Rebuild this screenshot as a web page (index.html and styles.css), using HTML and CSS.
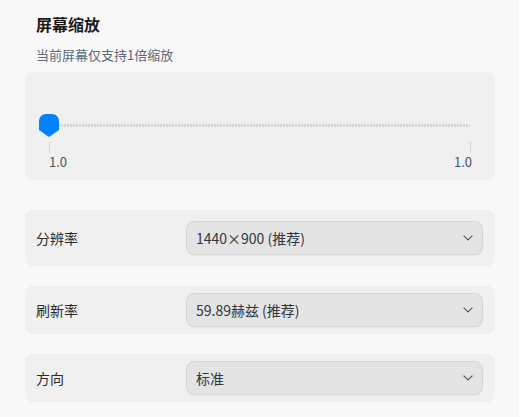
FILE: index.html
```html
<!DOCTYPE html>
<html lang="zh-CN">
<head>
<meta charset="utf-8">
<title>屏幕缩放</title>
<link rel="stylesheet" href="styles.css">
</head>
<body>
<div class="page">
  <h1 class="title">屏幕缩放</h1>
  <p class="subtitle">当前屏幕仅支持1倍缩放</p>

  <section class="card scale-card">
    <div class="slider">
      <div class="track"></div>
      <svg class="handle" width="20" height="23" viewBox="0 0 20 23">
        <path d="M0 7 A7 7 0 0 1 7 0 H13 A7 7 0 0 1 20 7 V16 L10 23 L0 16 Z" fill="#0081ff"/>
      </svg>
    </div>
    <div class="ticks">
      <span class="tick"></span>
      <span class="tick"></span>
    </div>
    <div class="tick-labels">
      <span>1.0</span>
      <span>1.0</span>
    </div>
  </section>

  <section class="card row row-first">
    <span class="label">分辨率</span>
    <div class="select">
      <span>1440×900 (推荐)</span>
      <svg class="chevron" width="10" height="6" viewBox="0 0 10 6"><polyline points="0.6,0.6 5,5 9.4,0.6" fill="none" stroke="#4f5863" stroke-width="1.2"/></svg>
    </div>
  </section>

  <section class="card row">
    <span class="label">刷新率</span>
    <div class="select">
      <span>59.89赫兹 (推荐)</span>
      <svg class="chevron" width="10" height="6" viewBox="0 0 10 6"><polyline points="0.6,0.6 5,5 9.4,0.6" fill="none" stroke="#4f5863" stroke-width="1.2"/></svg>
    </div>
  </section>

  <section class="card row">
    <span class="label">方向</span>
    <div class="select">
      <span>标准</span>
      <svg class="chevron" width="10" height="6" viewBox="0 0 10 6"><polyline points="0.6,0.6 5,5 9.4,0.6" fill="none" stroke="#4f5863" stroke-width="1.2"/></svg>
    </div>
  </section>
</div>
</body>
</html>
```

FILE: styles.css
```css
html, body {
  margin: 0;
  padding: 0;
  background: #f8f8f8;
}

body {
  font-family: "Noto Sans CJK SC", "Noto Sans", sans-serif;
  color: #2a2a2a;
}

.page {
  padding: 12px 24px 0 25px;
}

.title {
  margin: 0 0 0 11px;
  font-size: 16px;
  line-height: 24px;
  font-weight: 700;
  color: #1a1a1a;
}

.subtitle {
  margin: 9px 0 0 11px;
  font-size: 13px;
  line-height: 20px;
  color: #5c6978;
}

.card {
  background: #f0f0f0;
  border-radius: 8px;
}

.scale-card {
  margin-top: 7px;
  padding: 42px 24px 9px 24px;
}

.slider {
  position: relative;
  height: 23px;
}

.track {
  position: absolute;
  top: 10px;
  left: 0;
  right: 1px;
  height: 3px;
  background: repeating-linear-gradient(90deg, #d3d3d3 0 2px, transparent 2px 3px);
}

.handle {
  position: absolute;
  left: -10px;
  top: 0;
  display: block;
}

.ticks {
  margin-top: 5px;
  display: flex;
  justify-content: space-between;
  height: 11px;
}

.tick {
  width: 1px;
  height: 11px;
  background: #d2d2d2;
}

.tick-labels {
  display: flex;
  justify-content: space-between;
  font-size: 13px;
  line-height: 18px;
  color: #4a5360;
  margin-right: -1px;
}

.row {
  display: grid;
  grid-template-columns: 150px 1fr;
  align-items: center;
  padding: 7px 12px 7px 11px;
  margin-top: 20px;
}

.row-first {
  margin-top: 30px;
  padding-top: 11px;
  padding-bottom: 11px;
}

.label {
  font-size: 14px;
  line-height: 20px;
  color: #2b2b2b;
}

.select {
  box-sizing: border-box;
  height: 34px;
  display: flex;
  align-items: center;
  justify-content: space-between;
  padding: 0 9px 0 9px;
  background: #e4e4e4;
  border: 1px solid #d6d6d6;
  border-radius: 8px;
  box-shadow: 0 1px 0 rgba(0, 0, 0, 0.03);
  font-size: 14px;
  line-height: 20px;
  color: #2f3640;
}

.chevron {
  display: block;
  flex: none;
}
```
